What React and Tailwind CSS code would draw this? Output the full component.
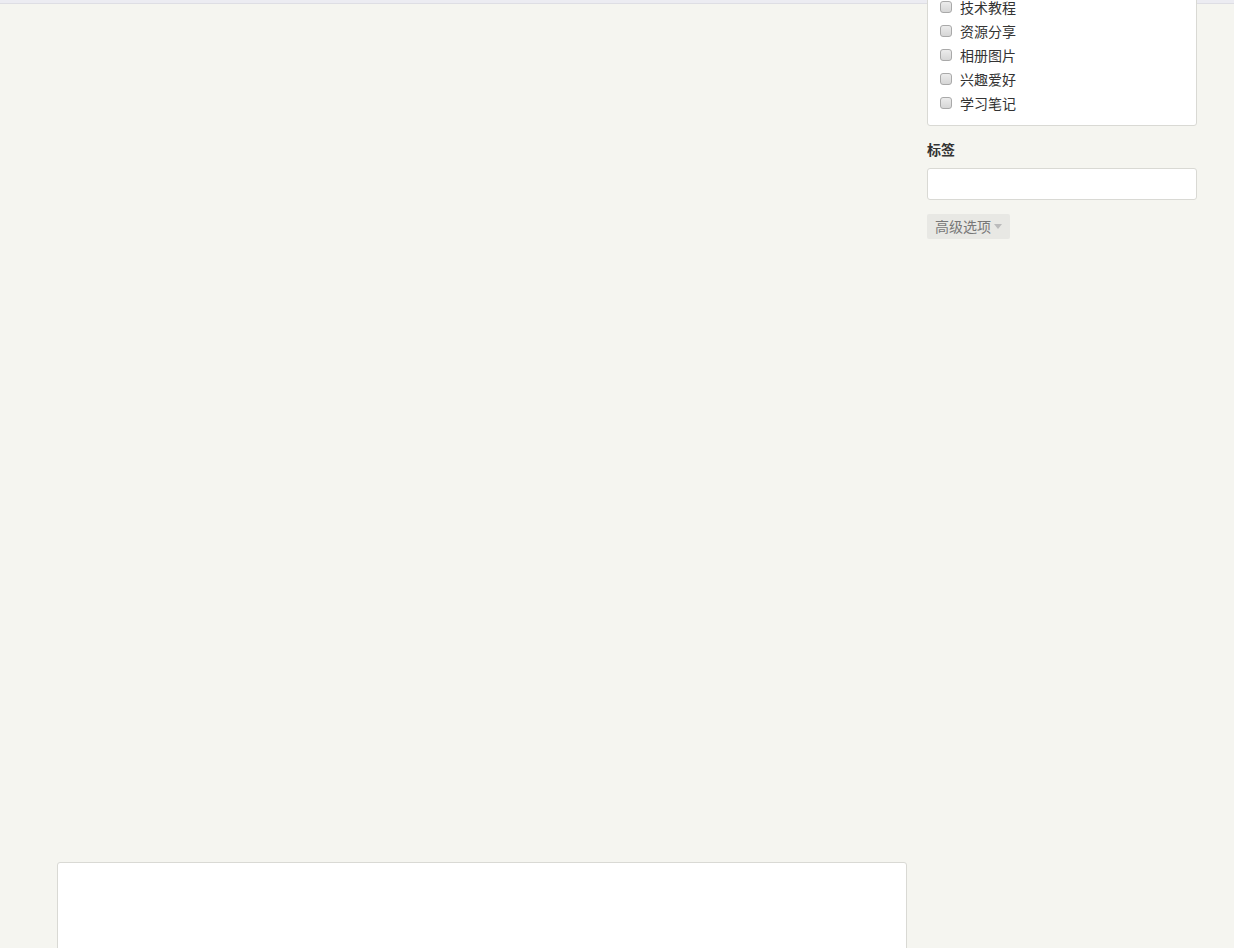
import React from "react";

const categories = ["技术教程", "资源分享", "相册图片", "兴趣爱好", "学习笔记"];

function CategoryRow({ label }) {
    return (
        <label className="flex items-center h-6 text-sm text-[#333]">
            <span className="w-[12px] h-[12px] -mt-[3px] rounded-[3px] border border-[#a9a9a9] bg-gradient-to-b from-[#ececec] to-[#d6d6d6] shrink-0" />
            <span className="ml-[8px] leading-6">{label}</span>
        </label>
    );
}

export default function App() {
    return (
        <div
            className="h-[948px] overflow-hidden bg-[#f5f5f0]"
            style={{ fontFamily: '"Liberation Sans", "Noto Sans CJK SC", sans-serif' }}
        >
            {/* top strip */}
            <div className="h-[4px] bg-[#ececf2] border-b border-[#dedee4]" />

            <div className="flex pl-[57px] gap-[20px]">
                {/* main column */}
                <div className="w-[850px] pt-[858px]">
                    <div className="h-[200px] bg-white border border-[#d9d9d4] rounded-[3px]" />
                </div>

                {/* sidebar */}
                <div className="w-[270px]">
                    <div className="-mt-[17px] bg-white border border-[#d9d9d4] rounded-[3px] pl-3 pt-2 pb-[9px]">
                        {categories.map((c) => (
                            <CategoryRow key={c} label={c} />
                        ))}
                    </div>

                    <div className="mt-[14px] text-sm font-bold text-[#333] leading-5">标签</div>
                    <input
                        type="text"
                        className="mt-2 block w-full h-[32px] bg-white border border-[#d9d9d4] rounded-[3px] outline-none"
                    />

                    <button className="mt-[14px] h-[25px] px-[8px] flex items-center bg-[#e8e8e4] rounded-[2px] text-sm text-[#777]">
                        高级选项
                        <span className="ml-[3px] w-0 h-0 border-l-[4px] border-r-[4px] border-t-[5px] border-l-transparent border-r-transparent border-t-[#bbb]" />
                    </button>
                </div>
            </div>
        </div>
    );
}
